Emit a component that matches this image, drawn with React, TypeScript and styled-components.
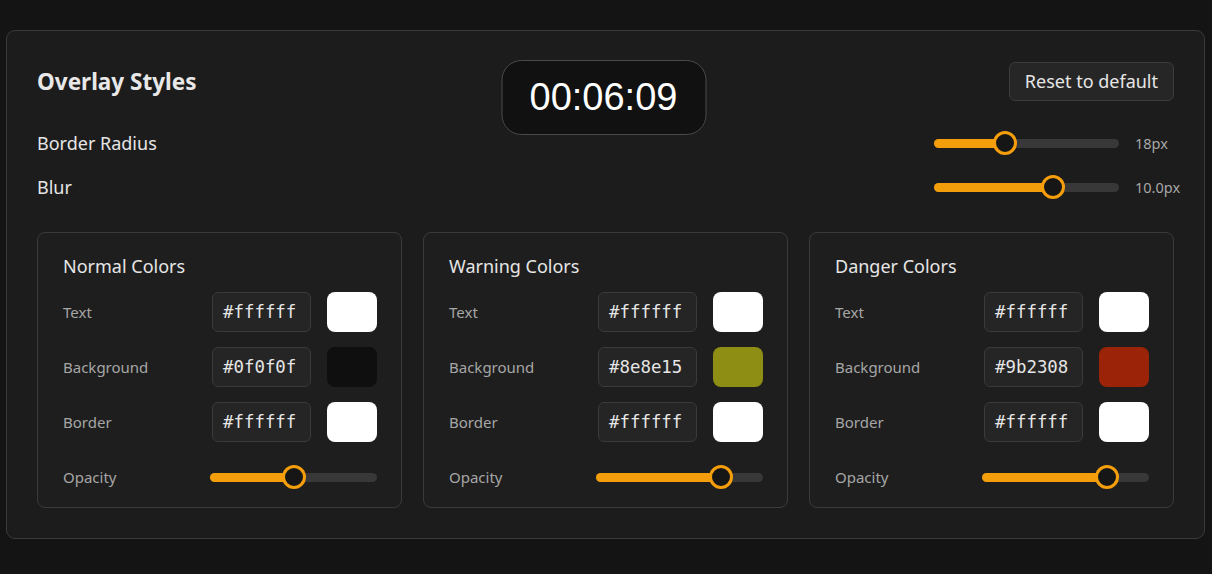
import React from "react";
import styled, { createGlobalStyle } from "styled-components";

const GlobalStyle = createGlobalStyle`
  html, body {
    margin: 0;
    padding: 0;
    background: #141414;
  }
  body {
    font-family: "Noto Sans", "Open Sans", sans-serif;
    color: #e6e6e6;
  }
`;

const Page = styled.div`
  padding: 30px 7px 34px 6px;
`;

const Panel = styled.div`
  position: relative;
  background: #1c1c1c;
  border: 1px solid #3a3a3a;
  border-radius: 9px;
  padding: 30px 30px 30px;
`;

const Header = styled.div`
  display: flex;
  align-items: center;
  justify-content: space-between;
  height: 40px;
  margin-bottom: 27px;
`;

const Title = styled.h2`
  margin: 0;
  font-size: 22.5px;
  font-weight: 700;
  color: #e8e8e8;
`;

const Timer = styled.div`
  position: absolute;
  top: 29px;
  left: calc(50% - 2px);
  transform: translateX(-50%);
  width: 205px;
  height: 75px;
  box-sizing: border-box;
  display: flex;
  align-items: center;
  justify-content: center;
  background: #111111;
  border: 1px solid #4a4a4a;
  border-radius: 20px;
  font-family: "Liberation Sans", Arial, sans-serif;
  font-size: 38px;
  color: #ffffff;
`;

const ResetButton = styled.button`
  height: 39px;
  padding: 0 15px;
  background: #262626;
  border: 1px solid #3c3c3c;
  border-radius: 6px;
  color: #e6e6e6;
  font-family: inherit;
  font-size: 18px;
`;

const SettingRow = styled.div`
  display: flex;
  align-items: center;
  justify-content: space-between;
  height: 30px;
  margin-bottom: 14px;
`;

const SettingLabel = styled.span`
  font-size: 18px;
  color: #e6e6e6;
`;

const SliderGroup = styled.div`
  display: flex;
  align-items: center;
  gap: 16px;
`;

const Value = styled.span`
  width: 39px;
  font-size: 14.5px;
  color: #a6a6a6;
  white-space: nowrap;
`;

const Track = styled.div<{ $width?: number }>`
  position: relative;
  width: ${(p) => (p.$width ? `${p.$width}px` : "100%")};
  height: 9px;
  border-radius: 5px;
  background: #383838;
`;

const Fill = styled.div`
  position: absolute;
  left: 0;
  top: 0;
  bottom: 0;
  border-radius: 5px;
  background: #f59e0b;
`;

const Thumb = styled.div`
  position: absolute;
  top: 50%;
  width: 24px;
  height: 24px;
  box-sizing: border-box;
  margin-left: -12px;
  margin-top: -12px;
  border-radius: 50%;
  background: #161616;
  border: 3px solid #f59e0b;
`;

const Slider: React.FC<{ value: number; width?: number }> = ({ value, width }) => (
  <Track $width={width}>
    <Fill style={{ width: `${value * 100}%` }} />
    <Thumb style={{ left: `${value * 100}%` }} />
  </Track>
);

const Cards = styled.div`
  display: grid;
  grid-template-columns: repeat(3, 1fr);
  gap: 21px;
  margin-top: 30px;
`;

const Card = styled.div`
  background: #1e1e1e;
  border: 1px solid #3a3a3a;
  border-radius: 8px;
  padding: 22px 24px 10px 25px;
`;

const CardTitle = styled.h3`
  margin: 0 0 15px;
  font-size: 18px;
  font-weight: 400;
  color: #e6e6e6;
  line-height: 22px;
`;

const ColorGrid = styled.div`
  display: grid;
  grid-template-columns: 1fr 99px 50px;
  column-gap: 16px;
  row-gap: 15px;
  align-items: center;
`;

const RowLabel = styled.span`
  font-size: 15px;
  color: #a6a6a6;
`;

const HexInput = styled.div`
  height: 40px;
  box-sizing: border-box;
  display: flex;
  align-items: center;
  padding-left: 10px;
  background: #252525;
  border: 1px solid #3a3a3a;
  border-radius: 6px;
  font-family: "DejaVu Sans Mono", monospace;
  font-size: 17.4px;
  color: #e6e6e6;
`;

const Swatch = styled.div<{ $color: string }>`
  height: 40px;
  border-radius: 8px;
  background: ${(p) => p.$color};
`;

const SliderCell = styled.div`
  grid-column: 2 / 4;
  height: 40px;
  margin-left: -2px;
  display: flex;
  align-items: center;
`;

interface ColorSet {
  title: string;
  text: string;
  background: string;
  border: string;
  opacity: number;
}

const sets: ColorSet[] = [
  { title: "Normal Colors", text: "#ffffff", background: "#0f0f0f", border: "#ffffff", opacity: 0.5 },
  { title: "Warning Colors", text: "#ffffff", background: "#8e8e15", border: "#ffffff", opacity: 0.75 },
  { title: "Danger Colors", text: "#ffffff", background: "#9b2308", border: "#ffffff", opacity: 0.75 },
];

const ColorCard: React.FC<{ set: ColorSet }> = ({ set }) => (
  <Card>
    <CardTitle>{set.title}</CardTitle>
    <ColorGrid>
      <RowLabel>Text</RowLabel>
      <HexInput>{set.text}</HexInput>
      <Swatch $color={set.text} />
      <RowLabel>Background</RowLabel>
      <HexInput>{set.background}</HexInput>
      <Swatch $color={set.background} />
      <RowLabel>Border</RowLabel>
      <HexInput>{set.border}</HexInput>
      <Swatch $color={set.border} />
      <RowLabel>Opacity</RowLabel>
      <SliderCell>
        <Slider value={set.opacity} />
      </SliderCell>
    </ColorGrid>
  </Card>
);

const App: React.FC = () => (
  <Page>
    <GlobalStyle />
    <Panel>
      <Header>
        <Title>Overlay Styles</Title>
        <ResetButton>Reset to default</ResetButton>
      </Header>
      <Timer>00:06:09</Timer>
      <SettingRow>
        <SettingLabel>Border Radius</SettingLabel>
        <SliderGroup>
          <Slider value={0.385} width={185} />
          <Value>18px</Value>
        </SliderGroup>
      </SettingRow>
      <SettingRow>
        <SettingLabel>Blur</SettingLabel>
        <SliderGroup>
          <Slider value={0.645} width={185} />
          <Value>10.0px</Value>
        </SliderGroup>
      </SettingRow>
      <Cards>
        {sets.map((s) => (
          <ColorCard key={s.title} set={s} />
        ))}
      </Cards>
    </Panel>
  </Page>
);

export default App;
